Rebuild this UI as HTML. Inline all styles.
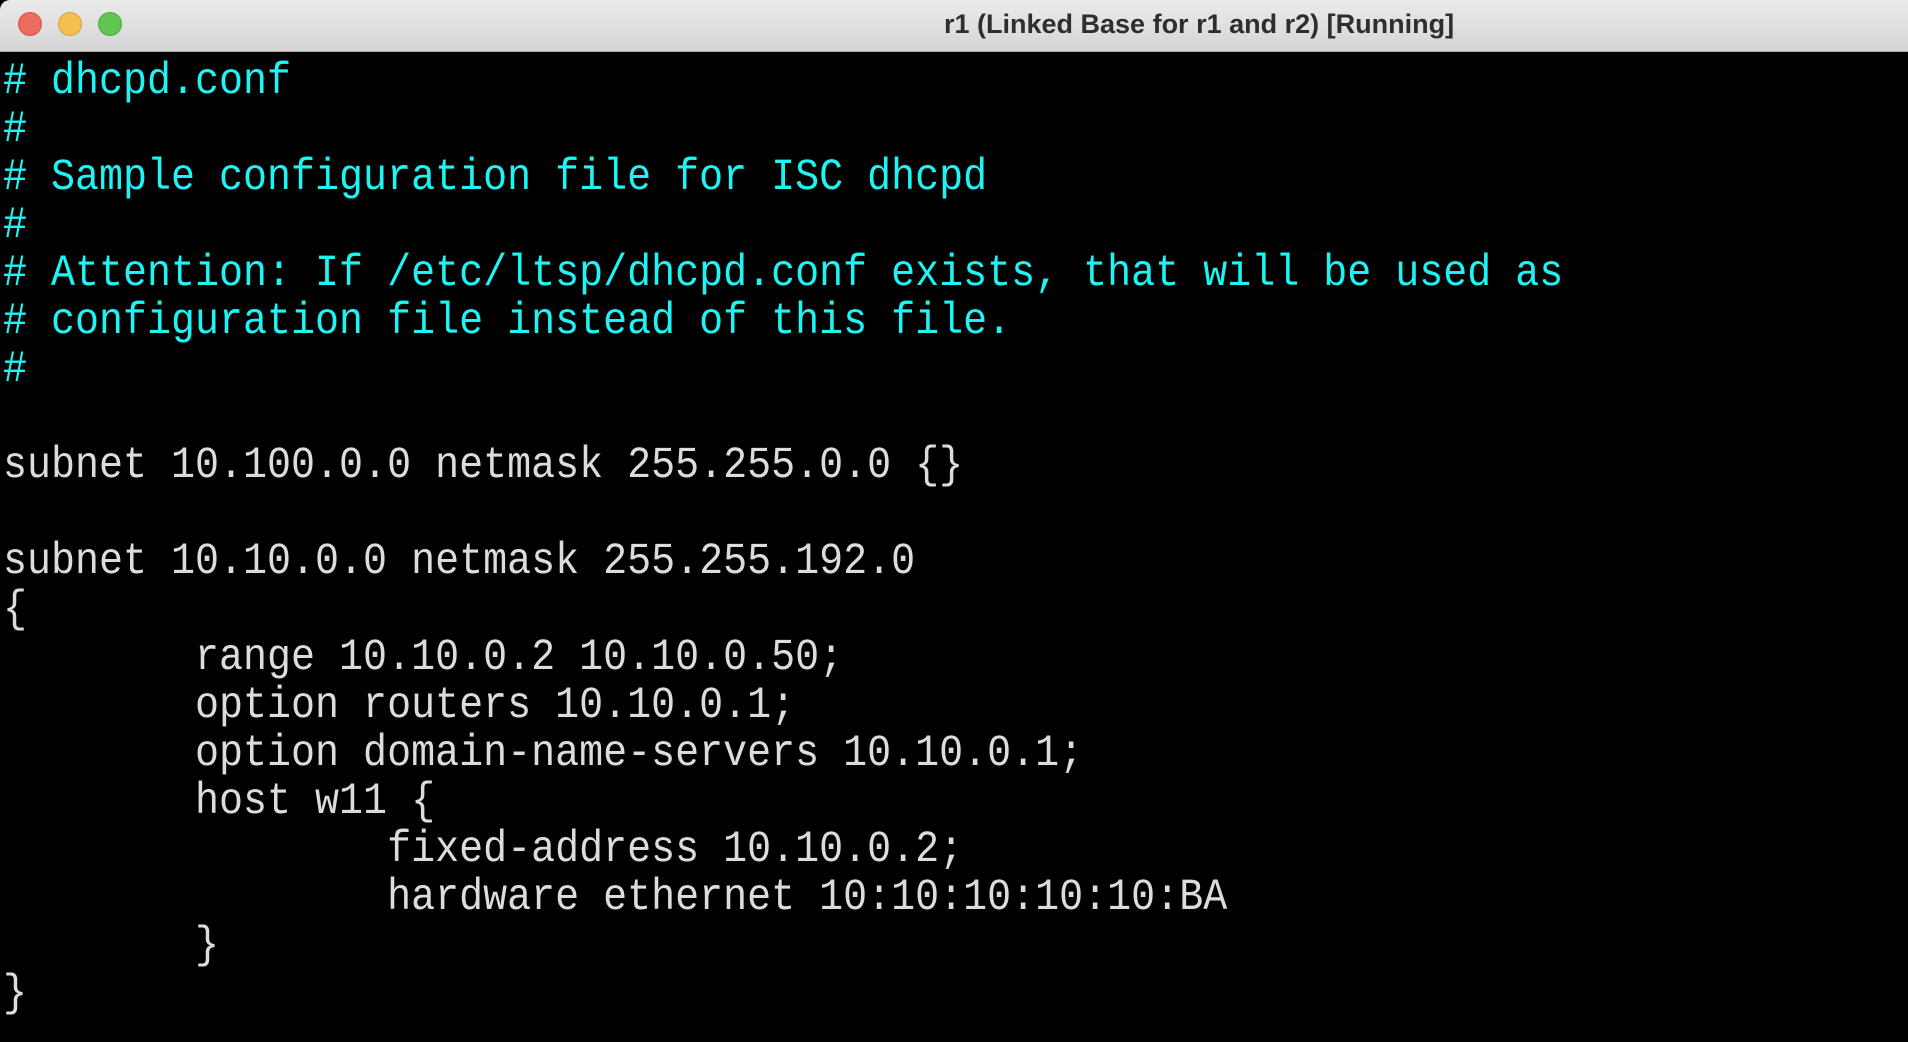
<!DOCTYPE html>
<html><head><meta charset="utf-8"><style>
html,body{margin:0;padding:0;width:1908px;height:1042px;overflow:hidden;background:#000;}
.tb{position:absolute;left:0;top:0;width:1908px;height:51px;background:linear-gradient(#ebebeb,#d5d5d5);border-bottom:1px solid #a8a8a8;border-top-left-radius:10px;}
.dot{position:absolute;top:12px;width:22px;height:22px;border-radius:50%;}
.title{position:absolute;left:944px;top:9px;font:bold 27px "Liberation Sans",sans-serif;color:#2e2e2e;white-space:nowrap;}
.ln{position:absolute;left:3px;height:48px;line-height:48px;font-family:"Liberation Mono",monospace;font-size:40px;white-space:pre;transform:scaleY(1.12);transform-origin:50% 50%;color:#dcdcdc;}
.c{color:#1ff4f4;}
</style></head><body>
<div class="tb">
<div class="dot" style="left:18px;background:#ec6a5e;border:1px solid #d25448"></div>
<div class="dot" style="left:58px;background:#f4bf4f;border:1px solid #d6a13a"></div>
<div class="dot" style="left:98px;background:#61c554;border:1px solid #4aa83e"></div>
<div class="title">r1 (Linked Base for r1 and r2) [Running]</div>
</div>
<div style="position:absolute;left:0;top:5px;width:1908px;">
<div class="ln c" style="top:54px"># dhcpd.conf</div>
<div class="ln c" style="top:102px">#</div>
<div class="ln c" style="top:150px"># Sample configuration file for ISC dhcpd</div>
<div class="ln c" style="top:198px">#</div>
<div class="ln c" style="top:246px"># Attention: If /etc/ltsp/dhcpd.conf exists, that will be used as</div>
<div class="ln c" style="top:294px"># configuration file instead of this file.</div>
<div class="ln c" style="top:342px">#</div>
<div class="ln" style="top:438px">subnet 10.100.0.0 netmask 255.255.0.0 {}</div>
<div class="ln" style="top:534px">subnet 10.10.0.0 netmask 255.255.192.0</div>
<div class="ln" style="top:582px">{</div>
<div class="ln" style="top:630px">        range 10.10.0.2 10.10.0.50;</div>
<div class="ln" style="top:678px">        option routers 10.10.0.1;</div>
<div class="ln" style="top:726px">        option domain-name-servers 10.10.0.1;</div>
<div class="ln" style="top:774px">        host w11 {</div>
<div class="ln" style="top:822px">                fixed-address 10.10.0.2;</div>
<div class="ln" style="top:870px">                hardware ethernet 10:10:10:10:10:BA</div>
<div class="ln" style="top:918px">        }</div>
<div class="ln" style="top:966px">}</div>
</div>
</body></html>
